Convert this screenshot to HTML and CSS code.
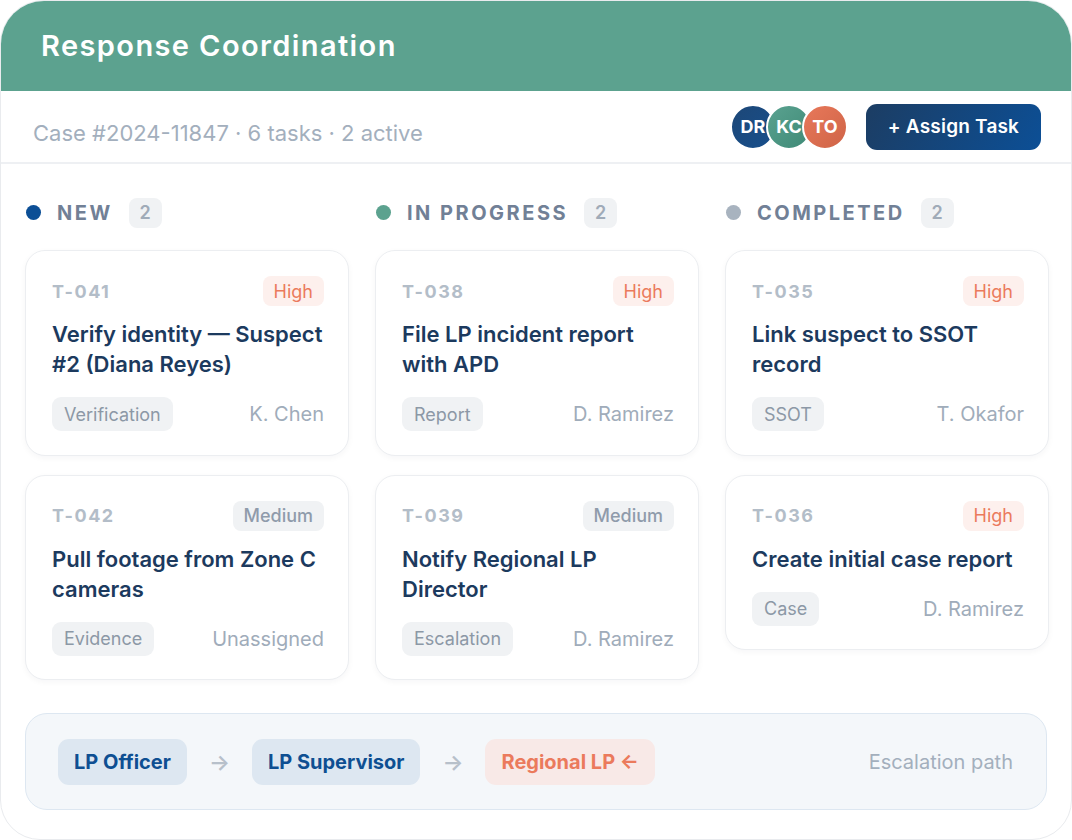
FILE: index.html
```html
<!DOCTYPE html>
<html>
<head>
<meta charset="utf-8">
<link rel="stylesheet" href="styles.css">
</head>
<body>
<div class="frame">
  <div class="header"><h1 class="title">Response Coordination</h1></div>
  <div class="sub">
    <div class="case">Case #2024-11847 · 6 tasks · 2 active</div>
    <div class="actions">
      <div class="avatars">
        <span class="av av-dr">DR</span>
        <span class="av av-kc">KC</span>
        <span class="av av-to">TO</span>
      </div>
      <button class="assign">+ Assign Task</button>
    </div>
  </div>
  <div class="board">
    <div class="col">
      <div class="col-head"><span class="dot dot-new"></span><span class="col-name">NEW</span><span class="count">2</span></div>
      <div class="card">
        <div class="card-top"><span class="tid">T-041</span><span class="prio high">High</span></div>
        <div class="card-title">Verify identity — Suspect #2 (Diana Reyes)</div>
        <div class="card-foot"><span class="tag">Verification</span><span class="who">K. Chen</span></div>
      </div>
      <div class="card">
        <div class="card-top"><span class="tid">T-042</span><span class="prio med">Medium</span></div>
        <div class="card-title">Pull footage from Zone C cameras</div>
        <div class="card-foot"><span class="tag">Evidence</span><span class="who">Unassigned</span></div>
      </div>
    </div>
    <div class="col">
      <div class="col-head"><span class="dot dot-prog"></span><span class="col-name">IN PROGRESS</span><span class="count">2</span></div>
      <div class="card">
        <div class="card-top"><span class="tid">T-038</span><span class="prio high">High</span></div>
        <div class="card-title">File LP incident report with APD</div>
        <div class="card-foot"><span class="tag">Report</span><span class="who">D. Ramirez</span></div>
      </div>
      <div class="card">
        <div class="card-top"><span class="tid">T-039</span><span class="prio med">Medium</span></div>
        <div class="card-title">Notify Regional LP Director</div>
        <div class="card-foot"><span class="tag">Escalation</span><span class="who">D. Ramirez</span></div>
      </div>
    </div>
    <div class="col">
      <div class="col-head"><span class="dot dot-done"></span><span class="col-name">COMPLETED</span><span class="count">2</span></div>
      <div class="card">
        <div class="card-top"><span class="tid">T-035</span><span class="prio high">High</span></div>
        <div class="card-title">Link suspect to SSOT record</div>
        <div class="card-foot"><span class="tag">SSOT</span><span class="who">T. Okafor</span></div>
      </div>
      <div class="card">
        <div class="card-top"><span class="tid">T-036</span><span class="prio high">High</span></div>
        <div class="card-title">Create initial case report</div>
        <div class="card-foot"><span class="tag">Case</span><span class="who">D. Ramirez</span></div>
      </div>
    </div>
  </div>
  <div class="escalation">
    <span class="step">LP Officer</span>
    <span class="arrow">→</span>
    <span class="step">LP Supervisor</span>
    <span class="arrow">→</span>
    <span class="step step-current">Regional LP ←</span>
    <span class="esc-label">Escalation path</span>
  </div>
</div>
</body>
</html>
```
FILE: styles.css
```css
* { box-sizing: border-box; }
html, body { margin: 0; padding: 0; background: #ffffff; }
body { font-family: Inter, "Noto Sans", sans-serif; }

.frame {
  width: 1072px;
  height: 840px;
  border: 1.5px solid #e9ebee;
  border-radius: 44px 44px 40px 40px;
  overflow: hidden;
  background: #ffffff;
}

.header {
  height: 90px;
  background: #5ca28f;
  padding: 0 40px;
  display: flex;
  align-items: center;
}
.title {
  margin: 0;
  color: #ffffff;
  font-family: Inter, sans-serif;
  font-weight: 600;
  font-size: 29px;
  letter-spacing: 1.4px;
  padding-bottom: 2px;
}

.sub {
  height: 73px;
  border-bottom: 2px solid #eef0f3;
  padding: 0 30px 0 32px;
  display: flex;
  align-items: center;
  justify-content: space-between;
}
.case {
  color: #a3afbd;
  font-size: 22px;
  padding-top: 12px;
}
.actions {
  display: flex;
  align-items: center;
  gap: 18px;
}
.avatars { display: flex; }
.av {
  width: 46px;
  height: 46px;
  border-radius: 50%;
  border: 2px solid #ffffff;
  color: #ffffff;
  font-weight: 700;
  font-size: 18px;
  display: flex;
  align-items: center;
  justify-content: center;
  margin-left: -10px;
}
.av:first-child { margin-left: 0; }
.av-dr { background: linear-gradient(135deg, #1d4777, #174f8c); }
.av-kc { background: linear-gradient(135deg, #5aa290, #3f8a76); }
.av-to { background: linear-gradient(135deg, #e8785a, #cf6447); }
.assign {
  font-family: Inter, sans-serif;
  height: 46px;
  width: 175px;
  border: none;
  border-radius: 11px;
  background: linear-gradient(120deg, #1c3d63, #0c4f96);
  color: #ffffff;
  font-size: 19px;
  font-weight: 600;
  letter-spacing: 0.2px;
}

.board {
  display: grid;
  grid-template-columns: repeat(3, 324px);
  column-gap: 26px;
  padding: 33px 24px 0 24px;
  align-items: start;
}
.col {
  display: flex;
  flex-direction: column;
  gap: 19px;
}
.col-head {
  display: flex;
  align-items: center;
  height: 31px;
  margin-bottom: 3px;
}
.dot {
  width: 15px;
  height: 15px;
  border-radius: 50%;
  margin-left: 1px;
  margin-right: 16px;
}
.dot-new { background: #0c4f96; }
.dot-prog { background: #5ca28f; }
.dot-done { background: #a8b3bf; }
.col-name {
  color: #718096;
  font-weight: 700;
  font-size: 20px;
  letter-spacing: 2.5px;
  margin-right: 16px;
}
.count {
  background: #f0f2f4;
  color: #a0abb8;
  font-weight: 600;
  font-size: 18px;
  border-radius: 8px;
  width: 33px;
  height: 30px;
  display: flex;
  align-items: center;
  justify-content: center;
}

.card {
  border: 1.5px solid #eceef1;
  border-radius: 20px;
  background: #ffffff;
  box-shadow: 0 2px 6px rgba(20, 30, 50, 0.04);
  padding: 25px 24px 23.5px 26px;
}
.card-top {
  display: flex;
  justify-content: space-between;
  align-items: center;
}
.tid {
  color: #b3bdc8;
  font-weight: 700;
  font-size: 18px;
  letter-spacing: 1.5px;
}
.prio {
  height: 30px;
  padding: 0 11px;
  border-radius: 8px;
  font-size: 18px;
  display: flex;
  align-items: center;
}
.prio.high { background: #fdf0ed; color: #eb7a5c; }
.prio.med { background: #f0f2f4; color: #8f9bab; font-weight: 500; }
.card-title {
  margin-top: 13px;
  color: #1c3a5e;
  font-weight: 600;
  font-size: 22px;
  line-height: 30px;
}
.card-foot {
  margin-top: 18px;
  display: flex;
  justify-content: space-between;
  align-items: center;
}
.tag {
  background: #f0f2f4;
  color: #8c98a6;
  font-size: 18px;
  height: 34px;
  padding: 0 12px;
  border-radius: 9px;
  display: flex;
  align-items: center;
}
.who {
  color: #a0acba;
  font-size: 20px;
}

.escalation {
  margin: 33px 24px 0 24px;
  height: 97px;
  border: 1.5px solid #dde7f1;
  border-radius: 22px;
  background: #f4f7fa;
  display: flex;
  align-items: center;
  padding: 0 33px 0 32px;
}
.step {
  background: #dde7f1;
  color: #0e4f92;
  font-weight: 700;
  font-size: 20px;
  height: 46px;
  padding: 0 16px;
  border-radius: 11px;
  display: flex;
  align-items: center;
}
.step-current {
  background: #f8e9e7;
  color: #eb7a5c;
}
.arrow {
  color: #b7c0ca;
  font-size: 22px;
  font-weight: 600;
  margin: 0 22px;
}
.esc-label {
  margin-left: auto;
  color: #a3afbd;
  font-size: 20px;
}
```
